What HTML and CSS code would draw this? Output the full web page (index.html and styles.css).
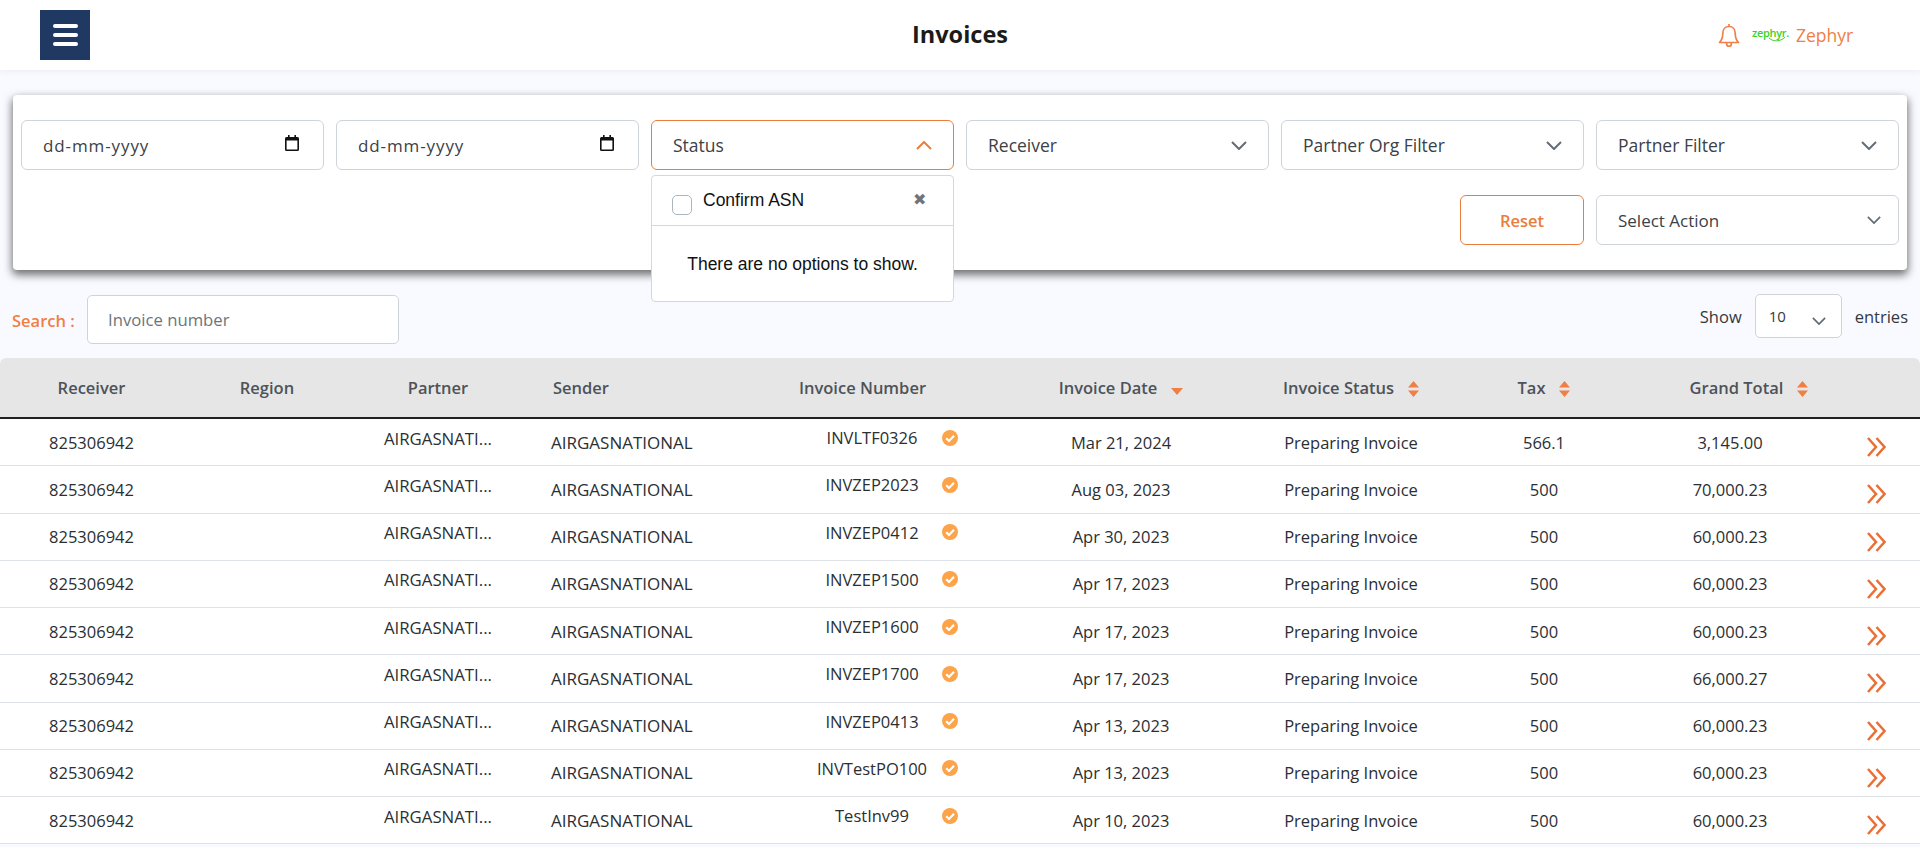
FILE: index.html
```html
<!DOCTYPE html>
<html lang="en">
<head>
<meta charset="utf-8">
<title>Invoices</title>
<link rel="stylesheet" href="styles.css">
</head>
<body>
<svg class="defs" width="0" height="0" aria-hidden="true">
  <symbol id="chev" viewBox="0 0 16 9"><polyline points="1,1 8,8 15,1" fill="none" stroke="currentColor" stroke-width="2"/></symbol>
  <symbol id="cal" viewBox="0 0 14 16"><path d="M3 0h1.6v2h4.8V0H11v2h1.5A1.5 1.5 0 0 1 14 3.5v11a1.5 1.5 0 0 1-1.5 1.5h-11A1.5 1.5 0 0 1 0 14.500v-11A1.500 1.500 0 0 1 1.500 2H3zM1.600 5.500v8.900h10.800V5.500z" fill="#111"/></symbol>
  <symbol id="sort" viewBox="0 0 11 16"><path d="M5.500 0 11 6.500H0zM0 9.500h11L5.500 16z" fill="currentColor"/></symbol>
  <symbol id="check" viewBox="0 0 16 16"><circle cx="8" cy="8" r="8" fill="#fda349"/><polyline points="4.200,8.200 7,11 12,5.800" fill="none" stroke="#fff" stroke-width="2.200"/></symbol>
  <symbol id="arrows" viewBox="0 0 19 20"><path d="M1 1l8 9-8 9M9.500 1l8 9-8 9" fill="none" stroke="currentColor" stroke-width="2.500"/></symbol>
</svg>

<header class="topbar">
  <button class="menu-btn" type="button" aria-label="Menu"><span></span><span></span><span></span></button>
  <h1 class="page-title">Invoices</h1>
  <div class="user-area">
    <svg class="bell" viewBox="0 0 22 24"><path d="M11 1v2.500M11 3.500c-4 0-6.200 3-6.200 6.700 0 5-1.100 7-3.300 9.300h19c-2.200-2.300-3.300-4.300-3.300-9.300 0-3.700-2.200-6.700-6.200-6.700zM8.500 20c0 4.500 5 4.500 5 0" fill="none" stroke="currentColor" stroke-width="1.700" stroke-linejoin="round"/></svg>
    <span class="logo">zephyr.<svg class="logo-smile" viewBox="0 0 22 6"><path d="M1 1c5 5 14 5 20-1" fill="none" stroke="#3ccf1e" stroke-width="1.200"/></svg></span>
    <span class="user-name">Zephyr</span>
  </div>
</header>

<main>
  <section class="filter-card">
    <div class="field date">dd-mm-yyyy<svg class="cal"><use href="#cal"/></svg></div>
    <div class="field date">dd-mm-yyyy<svg class="cal"><use href="#cal"/></svg></div>
    <div class="field select open">Status<svg class="chev up"><use href="#chev"/></svg>
      <div class="dropdown">
        <div class="dd-head"><span class="dd-check"></span><span class="dd-label">Confirm ASN</span><span class="dd-close">✖</span></div>
        <div class="dd-empty">There are no options to show.</div>
      </div>
    </div>
    <div class="field select">Receiver<svg class="chev"><use href="#chev"/></svg></div>
    <div class="field select">Partner Org Filter<svg class="chev"><use href="#chev"/></svg></div>
    <div class="field select">Partner Filter<svg class="chev"><use href="#chev"/></svg></div>
    <button class="reset" type="button">Reset</button>
    <div class="field select action">Select Action<svg class="chev small"><use href="#chev"/></svg></div>
  </section>

  <section class="toolbar">
    <label class="search-label">Search :</label>
    <div class="search-box">Invoice number</div>
    <div class="entries">
      <span>Show</span>
      <div class="page-size">10<svg class="chev small"><use href="#chev"/></svg></div>
      <span>entries</span>
    </div>
  </section>

  <section class="table-wrap">
    <table class="grid">
      <colgroup>
        <col class="c1"><col class="c2"><col class="c3"><col class="c4"><col class="c5"><col class="c6"><col class="c7"><col class="c8"><col class="c9"><col class="c10">
      </colgroup>
      <thead>
        <tr>
          <th>Receiver</th><th>Region</th><th>Partner</th><th class="left">Sender</th><th>Invoice Number</th>
          <th>Invoice Date<svg class="caret" viewBox="0 0 12 7"><path d="M0 0h12L6 7z" fill="currentColor"/></svg></th>
          <th>Invoice Status<svg class="sort"><use href="#sort"/></svg></th>
          <th>Tax<svg class="sort"><use href="#sort"/></svg></th>
          <th class="total-head">Grand Total<svg class="sort"><use href="#sort"/></svg></th>
          <th></th>
        </tr>
      </thead>
      <tbody>
        <tr><td>825306942</td><td></td><td class="raised">AIRGASNATI...</td><td class="left">AIRGASNATIONAL</td><td class="inv"><div class="inv-box"><span>INVLTF0326</span><svg class="ok"><use href="#check"/></svg></div></td><td>Mar 21, 2024</td><td>Preparing Invoice</td><td>566.1</td><td>3,145.00</td><td class="go"><svg class="arrows"><use href="#arrows"/></svg></td></tr>
        <tr><td>825306942</td><td></td><td class="raised">AIRGASNATI...</td><td class="left">AIRGASNATIONAL</td><td class="inv"><div class="inv-box"><span>INVZEP2023</span><svg class="ok"><use href="#check"/></svg></div></td><td>Aug 03, 2023</td><td>Preparing Invoice</td><td>500</td><td>70,000.23</td><td class="go"><svg class="arrows"><use href="#arrows"/></svg></td></tr>
        <tr><td>825306942</td><td></td><td class="raised">AIRGASNATI...</td><td class="left">AIRGASNATIONAL</td><td class="inv"><div class="inv-box"><span>INVZEP0412</span><svg class="ok"><use href="#check"/></svg></div></td><td>Apr 30, 2023</td><td>Preparing Invoice</td><td>500</td><td>60,000.23</td><td class="go"><svg class="arrows"><use href="#arrows"/></svg></td></tr>
        <tr><td>825306942</td><td></td><td class="raised">AIRGASNATI...</td><td class="left">AIRGASNATIONAL</td><td class="inv"><div class="inv-box"><span>INVZEP1500</span><svg class="ok"><use href="#check"/></svg></div></td><td>Apr 17, 2023</td><td>Preparing Invoice</td><td>500</td><td>60,000.23</td><td class="go"><svg class="arrows"><use href="#arrows"/></svg></td></tr>
        <tr><td>825306942</td><td></td><td class="raised">AIRGASNATI...</td><td class="left">AIRGASNATIONAL</td><td class="inv"><div class="inv-box"><span>INVZEP1600</span><svg class="ok"><use href="#check"/></svg></div></td><td>Apr 17, 2023</td><td>Preparing Invoice</td><td>500</td><td>60,000.23</td><td class="go"><svg class="arrows"><use href="#arrows"/></svg></td></tr>
        <tr><td>825306942</td><td></td><td class="raised">AIRGASNATI...</td><td class="left">AIRGASNATIONAL</td><td class="inv"><div class="inv-box"><span>INVZEP1700</span><svg class="ok"><use href="#check"/></svg></div></td><td>Apr 17, 2023</td><td>Preparing Invoice</td><td>500</td><td>66,000.27</td><td class="go"><svg class="arrows"><use href="#arrows"/></svg></td></tr>
        <tr><td>825306942</td><td></td><td class="raised">AIRGASNATI...</td><td class="left">AIRGASNATIONAL</td><td class="inv"><div class="inv-box"><span>INVZEP0413</span><svg class="ok"><use href="#check"/></svg></div></td><td>Apr 13, 2023</td><td>Preparing Invoice</td><td>500</td><td>60,000.23</td><td class="go"><svg class="arrows"><use href="#arrows"/></svg></td></tr>
        <tr><td>825306942</td><td></td><td class="raised">AIRGASNATI...</td><td class="left">AIRGASNATIONAL</td><td class="inv"><div class="inv-box"><span>INVTestPO100</span><svg class="ok"><use href="#check"/></svg></div></td><td>Apr 13, 2023</td><td>Preparing Invoice</td><td>500</td><td>60,000.23</td><td class="go"><svg class="arrows"><use href="#arrows"/></svg></td></tr>
        <tr><td>825306942</td><td></td><td class="raised">AIRGASNATI...</td><td class="left">AIRGASNATIONAL</td><td class="inv"><div class="inv-box"><span>TestInv99</span><svg class="ok"><use href="#check"/></svg></div></td><td>Apr 10, 2023</td><td>Preparing Invoice</td><td>500</td><td>60,000.23</td><td class="go"><svg class="arrows"><use href="#arrows"/></svg></td></tr>
      </tbody>
    </table>
  </section>
</main>
</body>
</html>
```

FILE: styles.css
```css
* { box-sizing: border-box; }
html, body { margin: 0; height: 847px; overflow: hidden; }
body {
  display: flex;
  flex-direction: column;
  background: #f9faff;
  color: #212529;
  font-family: "Open Sans", "Noto Sans", sans-serif;
  font-size: 16.500px;
  letter-spacing: 0;
}
.defs { display: block; height: 0; }

.topbar {
  height: 70px;
  flex: none;
  display: flex;
  align-items: center;
  padding: 0 0 0 40px;
  background: #fff;
  box-shadow: 0 1px 6px rgba(60, 70, 110, 0.08);
  position: relative;
}
.menu-btn {
  width: 50px;
  height: 50px;
  padding: 0;
  border: 0;
  background: #1f3963;
  display: flex;
  flex-direction: column;
  align-items: center;
  justify-content: center;
  gap: 5px;
}
.menu-btn span { width: 25px; height: 4px; border-radius: 2px; background: #fff; }
.page-title {
  flex: 1;
  margin: 0;
  padding-left: 112px;
  text-align: center;
  font-size: 23.500px;
  font-weight: 700;
  color: #1b1b1b;
  line-height: 1;
}
.user-area {
  width: 202px;
  flex: none;
  display: flex;
  align-items: center;
  color: #ef7f45;
}
.bell { width: 22px; height: 24px; margin-right: 10px; }
.logo {
  display: flex;
  flex-direction: column;
  align-items: flex-end;
  width: 39px;
  margin: -2px 7px 0 0;
  color: #3ccf1e;
  font-size: 11px;
  font-weight: 600;
  line-height: 11px;
  letter-spacing: -0.3px;
}
.logo-smile { width: 18px; height: 5px; margin-right: 3px; margin-top: -1px; }
.user-name { font-size: 17.500px; }

.filter-card {
  margin: 25px 13px 0;
  padding: 25px 8px;
  display: grid;
  grid-template-columns: repeat(6, 303px);
  grid-auto-rows: 50px;
  gap: 25px 12px;
  background: #fff;
  border-radius: 4px;
  box-shadow: 0 4px 8px 1px rgba(0, 0, 0, 0.55);
}
.field {
  position: relative;
  display: flex;
  align-items: center;
  justify-content: space-between;
  padding: 0 21px;
  background: #fff;
  border: 1px solid #ced4da;
  border-radius: 6px;
  color: #3b4147;
  font-size: 17.500px;
}
.date { font-size: 17px; letter-spacing: 0.9px; }
.select { padding: 0 22px 0 21px; }
.open { border-color: #ea7d3c; }
.cal { width: 14px; height: 16px; margin: -5px 3px 0 0; }
.chev { width: 16px; height: 9px; color: #646c75; margin-right: -1px; }
.chev.up { transform: rotate(180deg); color: #ea7d3c; }
.chev.small { width: 14px; height: 8px; }
.action { grid-column: 6; padding-right: 18px; font-size: 17px; }
.reset {
  grid-column: 5;
  justify-self: end;
  width: 124px;
  height: 50px;
  background: #fff;
  border: 1px solid #ea7d3c;
  border-radius: 6px;
  color: #ea7d3c;
  font: 600 16.500px "Open Sans", sans-serif;
}

.dropdown {
  position: absolute;
  top: 54px;
  left: -1px;
  right: -1px;
  height: 127px;
  z-index: 5;
  background: #fff;
  border: 1px solid #d5d7db;
  border-radius: 4px;
  font-family: "Liberation Sans", Arial, sans-serif;
  font-size: 17.500px;
  color: #111;
}
.dd-head {
  height: 50px;
  display: flex;
  align-items: flex-start;
  padding: 14px 0 0 20px;
  border-bottom: 1px solid #d5d7db;
}
.dd-check {
  width: 20px;
  height: 20px;
  margin-top: 5px;
  background: #fff;
  border: 1px solid #adb5bd;
  border-radius: 5px;
}
.dd-label { margin-left: 11px; line-height: 20px; }
.dd-close { margin-left: auto; margin-right: 27px; font-size: 16px; line-height: 20px; color: #6c757d; }
.dd-empty { padding-top: 28px; text-align: center; line-height: 20px; }

.toolbar {
  margin-top: 25px;
  padding: 0 12px;
  height: 63px;
  flex: none;
  display: flex;
  align-items: flex-start;
}
.search-label {
  width: 75px;
  flex: none;
  color: #ef7f45;
  font-weight: 600;
  line-height: 52px;
}
.search-box {
  width: 312px;
  height: 49px;
  display: flex;
  align-items: center;
  padding-left: 20px;
  background: #fff;
  border: 1px solid #ced4da;
  border-radius: 5px;
  color: #6c757d;
  font-size: 16.700px;
}
.entries {
  margin-left: auto;
  height: 44px;
  display: flex;
  align-items: center;
  gap: 13px;
  margin-top: -1px;
  color: #33393f;
}
.page-size {
  width: 87px;
  height: 44px;
  display: flex;
  align-items: center;
  justify-content: space-between;
  padding: 0 16px 0 13px;
  background: #fff;
  border: 1px solid #ced4da;
  border-radius: 5px;
  font-size: 15px;
}
.page-size .chev { margin-top: 9px; }

.table-wrap {
  flex: 1;
  overflow: hidden;
  background: #fff;
  border-radius: 6px 6px 0 0;
}
.grid {
  width: 1920px;
  table-layout: fixed;
  border-collapse: separate;
  border-spacing: 0;
}
.c1 { width: 183px; }
.c2 { width: 168px; }
.c3 { width: 174px; }
.c4 { width: 200px; }
.c5 { width: 275px; }
.c6 { width: 242px; }
.c7 { width: 218px; }
.c8 { width: 168px; }
.c9 { width: 204px; }
.c10 { width: 88px; }
th {
  height: 61px;
  padding: 0;
  background: #e6e6e6;
  border-bottom: 2px solid #212121;
  color: #4d5359;
  font-weight: 600;
  text-align: center;
  white-space: nowrap;
}
td {
  height: 47.250px;
  padding: 0;
  text-align: center;
  border-bottom: 1px solid #dee2e6;
  white-space: nowrap;
  color: #2a2f34;
}
th.left { text-align: left; padding-left: 28px; }
td.left { text-align: left; padding-left: 26px; font-size: 17px; }
td.raised { padding-bottom: 8px; font-size: 16.800px; }
.total-head { padding-left: 38px; }
.sort, .caret { color: #ef7f45; }
.sort { width: 11px; height: 16px; margin-left: 14px; vertical-align: -3px; }
.caret { width: 12px; height: 7px; margin-left: 14px; vertical-align: -1px; }
.inv-box {
  display: flex;
  align-items: center;
  padding: 0 0 9px 77px;
}
.inv-box span { width: 140px; text-align: center; }
.ok { width: 16px; height: 16px; flex: none; }
.go { padding-top: 10px; line-height: 0; }
.arrows { width: 19px; height: 20px; color: #ea6f35; }
```
